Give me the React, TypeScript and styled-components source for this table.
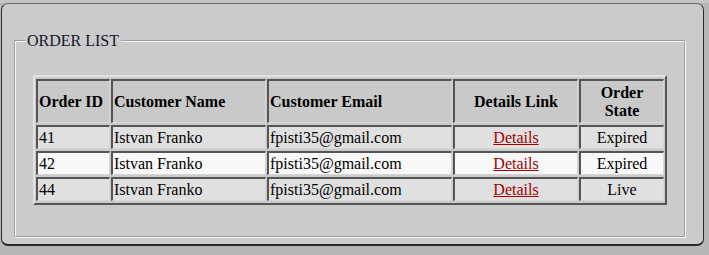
import styled, { createGlobalStyle } from 'styled-components'

const GlobalStyle = createGlobalStyle`
  html, body {
    margin: 0;
    padding: 0;
    background: #b9b9b9;
    font-family: 'Liberation Serif', 'Times New Roman', serif;
    font-size: 16px;
    color: #000;
  }
`

const Page = styled.div`
  padding: 3px 5px 0 1px;
  height: 255px;
  box-sizing: border-box;
  background: linear-gradient(#c4c4c4, #c4c4c4 3px, #b7b7b7 3px);
`

const Panel = styled.div`
  background: #cbcbcb;
  border: 1px solid #2a2a2a;
  border-top-color: #6a6a6a;
  border-bottom-width: 2px;
  border-radius: 7px;
  padding: 28px 17px 6px 12px;
`

const Group = styled.fieldset`
  margin: 0;
  padding: 25px 16px 31px 17px;
  border: 2px groove #f4f4f4;
  min-width: 0;
`

const Caption = styled.legend`
  margin-left: -8px;
  padding: 0 2px;
  color: #15152a;
  line-height: normal;
`

const OrderTable = styled.table`
  width: 634px;
  table-layout: fixed;
  border-collapse: separate;
  border-spacing: 1px 2px;
  border: 2px solid;
  border-color: #e2e2e2 #555 #555 #e2e2e2;
`

const Head = styled.th<{ $w: number; $center?: boolean }>`
  width: ${({ $w }) => $w}px;
  box-sizing: border-box;
  background: #c9c9c9;
  border-style: solid;
  border-width: 2px 1px 1px 2px;
  border-color: #555 #d6d6d6 #d6d6d6 #555;
  padding: 3px 1px 2px;
  font-weight: bold;
  text-align: ${({ $center }) => ($center ? 'center' : 'left')};
  vertical-align: middle;
`

const Row = styled.tr<{ $light?: boolean }>`
  background: ${({ $light }) => ($light ? '#f8f8f8' : '#e0e0e0')};
`

const Cell = styled.td<{ $center?: boolean }>`
  border-style: solid;
  border-width: 2px 1px 1px 2px;
  border-color: #555 #d6d6d6 #d6d6d6 #555;
  padding: 2px 1px 1px;
  white-space: nowrap;
  text-align: ${({ $center }) => ($center ? 'center' : 'left')};
`

const DetailsLink = styled.a`
  color: #a30000;
  text-decoration: underline;
`

type Order = { id: number; name: string; email: string; state: string }

const orders: Order[] = [
  { id: 41, name: 'Istvan Franko', email: 'fpisti35@gmail.com', state: 'Expired' },
  { id: 42, name: 'Istvan Franko', email: 'fpisti35@gmail.com', state: 'Expired' },
  { id: 44, name: 'Istvan Franko', email: 'fpisti35@gmail.com', state: 'Live' },
]

export default function App() {
  return (
    <>
      <GlobalStyle />
      <Page>
        <Panel>
          <Group>
            <Caption>ORDER LIST</Caption>
            <OrderTable>
              <thead>
                <tr>
                  <Head $w={74}>Order ID</Head>
                  <Head $w={155}>Customer Name</Head>
                  <Head $w={185}>Customer Email</Head>
                  <Head $w={125} $center>Details Link</Head>
                  <Head $w={85} $center>Order State</Head>
                </tr>
              </thead>
              <tbody>
                {orders.map((o, i) => (
                  <Row key={o.id} $light={i % 2 === 1}>
                    <Cell>{o.id}</Cell>
                    <Cell>{o.name}</Cell>
                    <Cell>{o.email}</Cell>
                    <Cell $center>
                      <DetailsLink href={`#order-${o.id}`}>Details</DetailsLink>
                    </Cell>
                    <Cell $center>{o.state}</Cell>
                  </Row>
                ))}
              </tbody>
            </OrderTable>
          </Group>
        </Panel>
      </Page>
    </>
  )
}
